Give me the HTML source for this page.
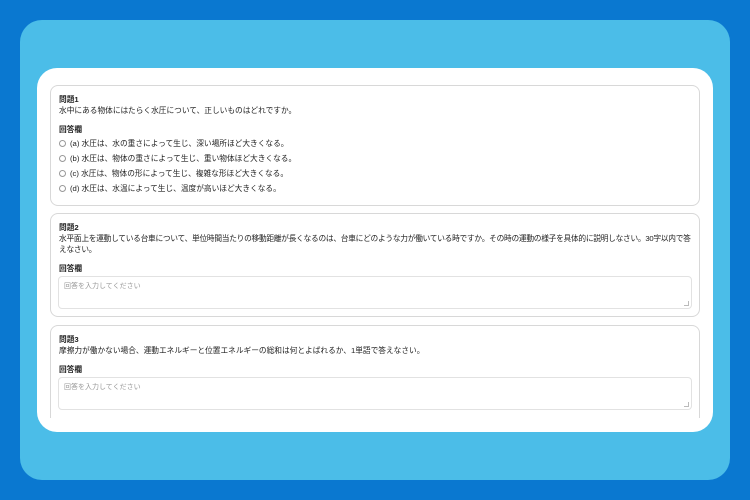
<!DOCTYPE html>
<html><head><meta charset="utf-8"><style>
*{box-sizing:border-box;margin:0;padding:0}
body{width:750px;height:500px;background:#0a78d0;position:relative;overflow:hidden;font-family:"Liberation Sans","Noto Sans CJK JP",sans-serif;color:#222}
.inner{position:absolute;left:20px;top:20px;width:710px;height:460px;background:#4bbde8;border-radius:22px}
.white{position:absolute;left:37px;top:68px;width:676px;height:364px;background:#fff;border-radius:20px}
.scroll{position:absolute;left:50px;top:78px;width:651px;height:340px;overflow:hidden}
.card{position:absolute;left:0;width:650px;border:1.5px solid #d8d8d8;border-radius:8px;background:#fff}
.t{position:absolute;left:8px;font-size:7.7px;line-height:11px;white-space:nowrap}
.b{font-weight:bold}
.opt{position:absolute;left:8px;font-size:7.7px;line-height:10px;white-space:nowrap}
.opt span{display:inline-block;width:7px;height:7px;border:1px solid #999;border-radius:50%;vertical-align:-1px;margin-right:4px}
.ta{position:absolute;left:7px;width:634px;height:33px;border:1px solid #e2e2e2;border-radius:4px;font-size:7px;color:#999;padding:4px 5px}
.ta:after{content:"";position:absolute;right:2px;bottom:2px;width:4px;height:4px;border-right:1px solid #bbb;border-bottom:1px solid #bbb}
</style></head><body>
<div class="inner"></div>
<div class="white"></div>
<div class="scroll">
<div class="card" style="top:7px;height:121px">
<div class="t b" style="top:8px">問題1</div>
<div class="t" style="top:19px">水中にある物体にはたらく水圧について、正しいものはどれですか。</div>
<div class="t b" style="top:38px">回答欄</div>
<div class="opt" style="top:53px"><span></span>(a) 水圧は、水の重さによって生じ、深い場所ほど大きくなる。</div>
<div class="opt" style="top:68px"><span></span>(b) 水圧は、物体の重さによって生じ、重い物体ほど大きくなる。</div>
<div class="opt" style="top:83px"><span></span>(c) 水圧は、物体の形によって生じ、複雑な形ほど大きくなる。</div>
<div class="opt" style="top:98px"><span></span>(d) 水圧は、水温によって生じ、温度が高いほど大きくなる。</div>
</div>
<div class="card" style="top:135px;height:104px">
<div class="t b" style="top:8px">問題2</div>
<div class="t" style="top:19px;letter-spacing:-0.25px">水平面上を運動している台車について、単位時間当たりの移動距離が長くなるのは、台車にどのような力が働いている時ですか。その時の運動の様子を具体的に説明しなさい。30字以内で答<br>えなさい。</div>
<div class="t b" style="top:49px">回答欄</div>
<div class="ta" style="top:62px">回答を入力してください</div>
</div>
<div class="card" style="top:247px;height:100px">
<div class="t b" style="top:8px">問題3</div>
<div class="t" style="top:19px">摩擦力が働かない場合、運動エネルギーと位置エネルギーの総和は何とよばれるか、1単語で答えなさい。</div>
<div class="t b" style="top:38px">回答欄</div>
<div class="ta" style="top:51px">回答を入力してください</div>
</div>
</div>
</body></html>
